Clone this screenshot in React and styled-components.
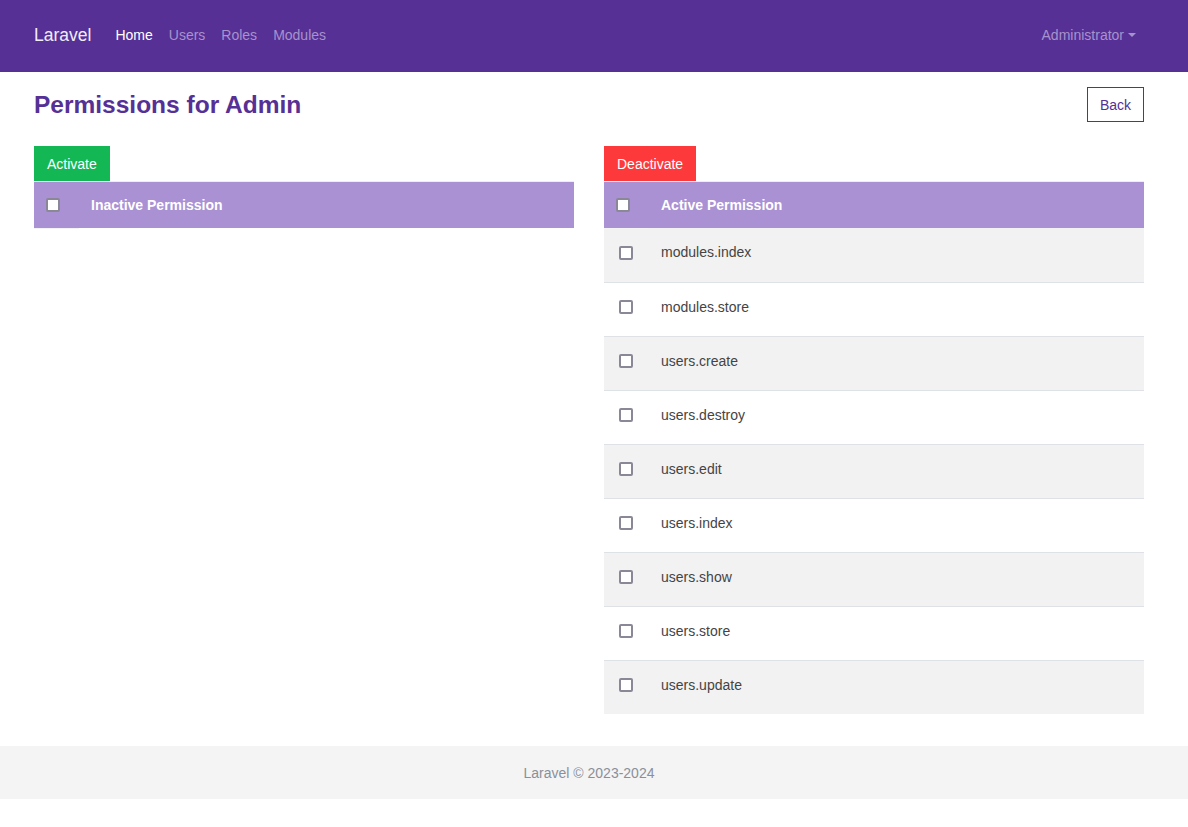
import React from 'react';
import styled, { createGlobalStyle } from 'styled-components';

const GlobalStyle = createGlobalStyle`
  body {
    margin: 0;
    font-family: "Liberation Sans", Arial, sans-serif;
    font-size: 14px;
    color: #444;
    background: #fff;
  }
`;

const activePermissions = [
  'modules.index',
  'modules.store',
  'users.create',
  'users.destroy',
  'users.edit',
  'users.index',
  'users.show',
  'users.store',
  'users.update',
];

const App = () => {
  return (
    <>
      <GlobalStyle />
      <Navbar>
        <NavContainer>
          <Brand>Laravel</Brand>
          <NavLinks>
            <NavLink $active>Home</NavLink>
            <NavLink>Users</NavLink>
            <NavLink>Roles</NavLink>
            <NavLink>Modules</NavLink>
          </NavLinks>
          <UserMenu>
            Administrator <Caret />
          </UserMenu>
        </NavContainer>
      </Navbar>

      <Content>
        <Main>
          <TitleRow>
            <Title>Permissions for Admin</Title>
            <BackButton>Back</BackButton>
          </TitleRow>

          <Columns>
            <Column>
              <ActionButton $variant="success">Activate</ActionButton>
              <Table>
                <thead>
                  <tr>
                    <CheckHead><Check type="checkbox" /></CheckHead>
                    <HeadCell>Inactive Permission</HeadCell>
                  </tr>
                </thead>
                <tbody />
              </Table>
            </Column>

            <Column>
              <ActionButton $variant="danger">Deactivate</ActionButton>
              <Table>
                <thead>
                  <tr>
                    <CheckHead><Check type="checkbox" /></CheckHead>
                    <HeadCell>Active Permission</HeadCell>
                  </tr>
                </thead>
                <tbody>
                  {activePermissions.map((perm, i) => (
                    <Row key={perm} $striped={i % 2 === 0}>
                      <CheckCell><Check type="checkbox" /></CheckCell>
                      <Cell>{perm}</Cell>
                    </Row>
                  ))}
                </tbody>
              </Table>
            </Column>
          </Columns>
        </Main>
      </Content>

      <Footer>
        <FooterText>Laravel © 2023-2024</FooterText>
      </Footer>
    </>
  );
};

// Styled Components
const Navbar = styled.nav`
  background: #563095;
  height: 72px;
  box-sizing: border-box;
  display: flex;
  align-items: center;
  padding: 0 10px 2px 0;
`;

const NavContainer = styled.div`
  width: 1110px;
  margin: 0 auto;
  display: flex;
  align-items: center;
`;

const Brand = styled.a`
  font-size: 17.5px;
  color: #f1ecf8;
  margin-right: 16px;
`;

const NavLinks = styled.div`
  display: flex;
  flex: 1;
`;

const NavLink = styled.a`
  padding: 0 8px;
  font-size: 14px;
  color: ${props => props.$active ? '#ffffff' : '#a692cc'};
`;

const UserMenu = styled.a`
  display: flex;
  align-items: center;
  padding: 0 8px;
  font-size: 14px;
  color: #a692cc;
`;

const Caret = styled.span`
  display: inline-block;
  margin-left: 4px;
  border-top: 4px solid #a692cc;
  border-left: 4px solid transparent;
  border-right: 4px solid transparent;
`;

const Content = styled.div`
  padding-right: 10px;
`;

const Main = styled.main`
  width: 1110px;
  margin: 0 auto;
  padding: 15px 0 32px;
`;

const TitleRow = styled.div`
  display: flex;
  justify-content: space-between;
  align-items: center;
  margin-bottom: 24px;
`;

const Title = styled.h1`
  margin: 0;
  font-size: 24.5px;
  font-weight: bold;
  color: #563095;
`;

const BackButton = styled.button`
  height: 35px;
  padding: 0 12px;
  background: #fff;
  border: 1px solid #563095;
  color: #563095;
  font-family: inherit;
  font-size: 14px;
`;

const Columns = styled.div`
  display: grid;
  grid-template-columns: 1fr 1fr;
  gap: 30px;
  align-items: start;
`;

const Column = styled.div`
  display: flex;
  flex-direction: column;
  align-items: flex-start;
`;

const ActionButton = styled.button`
  height: 35px;
  padding: 0 13px;
  border: none;
  font-family: inherit;
  font-size: 14px;
  color: #fff;
  background: ${props => props.$variant === 'success' ? '#13b855' : '#fd393c'};
`;

const Table = styled.table`
  width: 100%;
  border-collapse: collapse;
  border-top: 1px solid #eee;
`;

const HeadCell = styled.th`
  height: 46px;
  padding: 0 12px;
  text-align: left;
  background: #a991d4;
  color: #fff;
  font-size: 14px;
  font-weight: bold;
`;

const CheckHead = styled.th`
  width: 45px;
  height: 46px;
  padding: 0 0 0 12px;
  text-align: left;
  background: #a991d4;
  box-sizing: border-box;
  border-bottom: 1px solid #f4f4f4;
`;

const Row = styled.tr`
  background: ${props => props.$striped ? '#f2f2f2' : '#ffffff'};
  border-bottom: 1px solid #dee2e6;
  &:last-child {
    border-bottom: none;
  }
`;

const CheckCell = styled.td`
  height: 54px;
  box-sizing: border-box;
  padding: 17px 0 0 15px;
  vertical-align: top;
`;

const Cell = styled.td`
  padding: 16px 12px 0;
  vertical-align: top;
  color: #444;
  font-size: 14px;
  line-height: 16px;
`;

const Check = styled.input`
  appearance: none;
  -webkit-appearance: none;
  display: block;
  margin: 0;
  width: 14px;
  height: 14px;
  box-sizing: border-box;
  border: 2px solid #8a8896;
  border-radius: 2px;
  background: #fff;
`;

const Footer = styled.footer`
  background: #f4f4f4;
  height: 53px;
  display: flex;
  align-items: center;
  justify-content: center;
  padding-right: 10px;
`;

const FooterText = styled.span`
  color: #8a9099;
  font-size: 14px;
`;

export default App;
